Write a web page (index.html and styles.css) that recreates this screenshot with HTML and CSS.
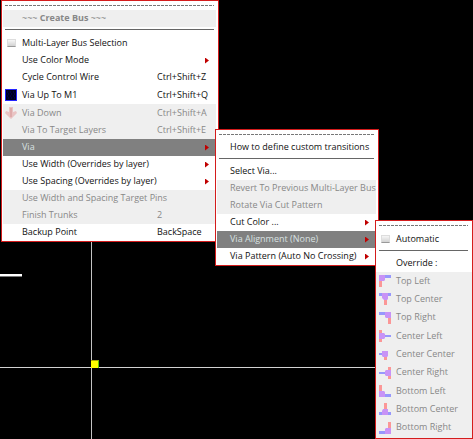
FILE: index.html
```html
<!DOCTYPE html>
<html lang="en">
<head>
<meta charset="utf-8">
<title>Create Bus</title>
<link rel="stylesheet" href="styles.css">
</head>
<body>
<main class="canvas">
  <div class="line-h"></div>
  <div class="line-v"></div>
  <div class="wire"></div>
  <div class="marker"></div>

  <div class="menu menu-bus" role="menu">
    <div class="tear"></div>
    <div class="item title off"><span class="label">~~~ <b>Create Bus</b> ~~~</span></div>
    <hr>
    <label class="item tall"><span class="icon"><input type="checkbox"></span><span class="label">Multi-Layer Bus Selection</span></label>
    <button class="item"><span class="label">Use Color Mode</span><span class="arrow"></span></button>
    <button class="item"><span class="label">Cycle Control Wire</span><span class="key">Ctrl+Shift+Z</span></button>
    <button class="item tall"><span class="icon"><svg width="12" height="12" viewBox="0 0 12 12"><rect width="12" height="12" fill="#2424ff"/><rect x="1" y="1" width="10" height="10" fill="#00001c"/><path d="M2 3h1m2 0h1m2 0h1M3 5h1m2 0h1m2 0h1M2 7h1m2 0h1m2 0h1M3 9h1m2 0h1m2 0h1" stroke="#00006c"/></svg></span><span class="label">Via Up To M1</span><span class="key">Ctrl+Shift+Q</span></button>
    <button class="item tall off" disabled><span class="icon"><svg width="12" height="12" viewBox="0 0 12 12"><path d="M4 0h4v5l3-1 1 2-6 6-6-6 1-2 3 1z" fill="#e9c3c3"/><path d="M6 1v9" stroke="#dfabab" stroke-width="2"/></svg></span><span class="label">Via Down</span><span class="key">Ctrl+Shift+A</span></button>
    <button class="item off" disabled><span class="label">Via To Target Layers</span><span class="key">Ctrl+Shift+E</span></button>
    <button class="item active"><span class="label">Via</span><span class="arrow"></span></button>
    <button class="item"><span class="label">Use Width (Overrides by layer)</span><span class="arrow"></span></button>
    <button class="item"><span class="label">Use Spacing (Overrides by layer)</span><span class="arrow"></span></button>
    <button class="item off" disabled><span class="label">Use Width and Spacing Target Pins</span></button>
    <button class="item off" disabled><span class="label">Finish Trunks</span><span class="key">2</span></button>
    <button class="item"><span class="label">Backup Point</span><span class="key">BackSpace</span></button>
  </div>

  <div class="menu menu-via" role="menu">
    <div class="tear"></div>
    <button class="item"><span class="label">How to define custom transitions</span></button>
    <hr>
    <button class="item"><span class="label">Select Via...</span></button>
    <button class="item off" disabled><span class="label">Revert To Previous Multi-Layer Bus</span></button>
    <button class="item off" disabled><span class="label">Rotate Via Cut Pattern</span></button>
    <button class="item"><span class="label">Cut Color ...</span><span class="arrow"></span></button>
    <button class="item active"><span class="label">Via Alignment (None)</span><span class="arrow"></span></button>
    <button class="item"><span class="label">Via Pattern (Auto No Crossing)</span><span class="arrow"></span></button>
  </div>

  <div class="menu menu-align" role="menu">
    <div class="tear"></div>
    <label class="item tall"><span class="icon"><input type="checkbox"></span><span class="label">Automatic</span></label>
    <hr>
    <div class="item"><span class="label">Override :</span></div>
    <div class="choices">
      <button class="item off" disabled><span class="icon"><svg width="12" height="12" viewBox="0 0 12 12"><path class="b" d="M6 0h6v3H6z"/><path class="r" d="M0 6h3v6H0z"/><path class="p" d="M0 0h6v5L5 6H0z"/></svg></span><span class="label">Top Left</span></button>
      <button class="item off" disabled><span class="icon"><svg width="12" height="12" viewBox="0 0 12 12"><path class="b" d="M0 0h12v3H0z"/><path class="r" d="M5 6h3v6H5z"/><path class="p" d="M3 0h6v6L8 7H5L3 5z"/></svg></span><span class="label">Top Center</span></button>
      <button class="item off" disabled><span class="icon"><svg width="12" height="12" viewBox="0 0 12 12"><path class="b" d="M0 0h6v3H0z"/><path class="r" d="M9 6h3v6H9z"/><path class="p" d="M6 0h6v6H7L6 5z"/></svg></span><span class="label">Top Right</span></button>
      <button class="item off" disabled><span class="icon"><svg width="12" height="12" viewBox="0 0 12 12"><path class="r" d="M0 0h3v12H0z"/><path class="b" d="M6 5h6v2H6z"/><path class="p" d="M0 3h5l1 1v4L5 9H0z"/></svg></span><span class="label">Center Left</span></button>
      <button class="item off" disabled><span class="icon"><svg width="12" height="12" viewBox="0 0 12 12"><path class="b" d="M0 5h4v2H0z"/><path class="r" d="M5 8h3v4H5z"/><path class="p" d="M3 3h6v5L8 9H4L3 8z"/></svg></span><span class="label">Center Center</span></button>
      <button class="item off" disabled><span class="icon"><svg width="12" height="12" viewBox="0 0 12 12"><path class="r" d="M9 0h3v12H9z"/><path class="b" d="M0 5h6v2H0z"/><path class="p" d="M7 3h5v6H7L6 8V4z"/></svg></span><span class="label">Center Right</span></button>
      <button class="item off" disabled><span class="icon"><svg width="12" height="12" viewBox="0 0 12 12"><path class="r" d="M0 0h3v6H0z"/><path class="b" d="M6 9h6v3H6z"/><path class="p" d="M0 6h5l1 1v5H0z"/></svg></span><span class="label">Bottom Left</span></button>
      <button class="item off" disabled><span class="icon"><svg width="12" height="12" viewBox="0 0 12 12"><path class="r" d="M5 0h3v6H5z"/><path class="b" d="M0 9h12v3H0z"/><path class="p" d="M4 6h5v6H3V8z"/></svg></span><span class="label">Bottom Center</span></button>
      <button class="item off" disabled><span class="icon"><svg width="12" height="12" viewBox="0 0 12 12"><path class="r" d="M9 0h3v6H9z"/><path class="b" d="M0 9h6v3H0z"/><path class="p" d="M7 6h5v6H6V7z"/></svg></span><span class="label">Bottom Right</span></button>
    </div>
  </div>
</main>
</body>
</html>
```
FILE: styles.css
```css
* { box-sizing: border-box; }

body {
  margin: 0;
  background: #000;
  font: 9px/16px "Open Sans", "Noto Sans", sans-serif;
}

.canvas {
  position: relative;
  min-height: 100vh;
  overflow: hidden;
}

/* Drawing canvas */
.line-h, .line-v, .wire, .marker { position: absolute; }
.line-h { left: 0; right: 0; top: 367px; height: 1px; background: #d2d2d2; }
.line-v { top: 0; bottom: 0; left: 91px; width: 1px; background: #c4c4c4; }
.wire { left: 0; top: 274px; width: 22px; height: 3px; background: #fff; border-bottom: 1px solid #777; }
.marker { left: 91px; top: 360px; width: 8px; height: 8px; background: #ff0; border-top: 1px solid #a8a800; border-right: 1px solid #5dc800; }

/* Menus */
.menu {
  position: absolute;
  background: #fff;
  border: 1px solid #d41c1c;
  padding: 4px 2px 0 1px;
}
.menu-bus { left: 1px; top: 0; width: 218px; }
.menu-via { left: 215px; top: 129px; width: 164px; }
.menu-align { left: 375px; top: 220px; width: 98px; }

.tear {
  height: 1px;
  margin: 0 2px 4px;
  background: repeating-linear-gradient(90deg, #777 0 3px, #fff 3px 4px);
}

hr {
  height: 1px;
  margin: 2px 2px 4px;
  border: 0;
  background: #666;
}

.item {
  display: flex;
  align-items: center;
  width: 100%;
  height: 17px;
  padding: 0 0 0 19px;
  border: 0;
  background: #fff;
  color: #111;
  font: inherit;
  text-align: left;
  white-space: nowrap;
}
.menu-via .item { padding-left: 13px; }
.item.tall { height: 18px; }
.item.off { background: #efefef; color: #888; }
.item.active { background: #808080; color: #d8e0e0; }

.label { flex: 1; padding-bottom: 1px; }
.key { width: 59px; padding-bottom: 1px; }

.icon {
  display: flex;
  justify-content: center;
  width: 12px;
  margin: 0 5px 0 -17px;
}

.arrow {
  width: 4px;
  height: 6px;
  margin-right: 7px;
  background: #c00000;
  clip-path: polygon(0 0, 100% 50%, 0 100%);
}

input {
  appearance: none;
  width: 9px;
  height: 8px;
  margin: 0;
  background: linear-gradient(#f6f6f6, #d2d2d2);
  border: 1px solid #ddd;
  border-bottom-color: #999;
}

.choices {
  display: grid;
  grid-auto-rows: 1fr;
  height: 166px;
  margin: 0 -2px 0 -1px;
  padding: 0 2px 1px 1px;
  background: #efefef;
}
.choices .item { height: auto; }

.b { fill: #9797fc; }
.r { fill: #fb9797; }
.p { fill: #c893f6; }
```
